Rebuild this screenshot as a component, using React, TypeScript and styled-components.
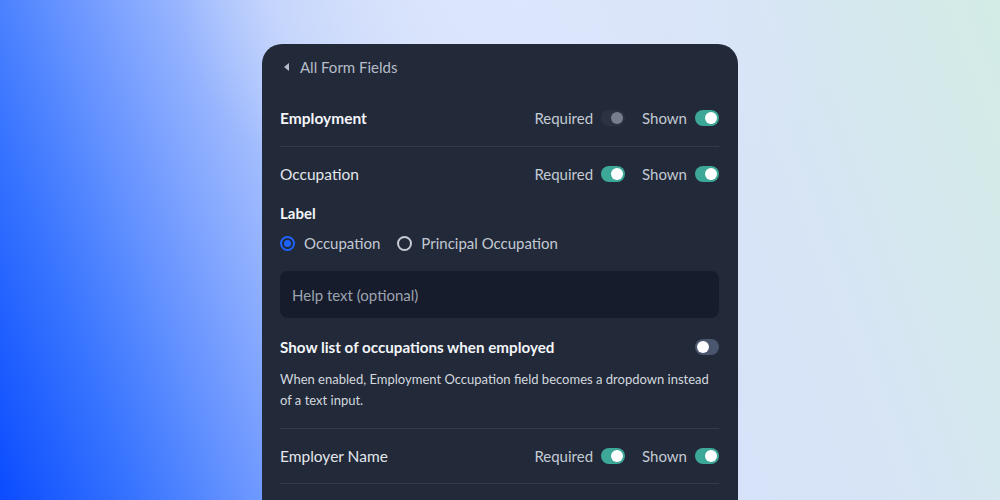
import React from "react";
import styled, { createGlobalStyle } from "styled-components";

const Global = createGlobalStyle`
  html, body { margin: 0; padding: 0; }
  body { font-family: "Lato", "Noto Sans", sans-serif; }
  * { box-sizing: border-box; }
`;

const Page = styled.div`
  width: 1000px;
  height: 500px;
  overflow: hidden;
  display: flex;
  justify-content: center;
  padding-top: 44px;
  background:
    radial-gradient(ellipse 340px 240px at 52% 0%, rgba(221, 230, 252, 0.9) 0%, rgba(221, 230, 252, 0) 100%),
    linear-gradient(70deg, #0a4cff 0%, #3a76ff 12%, #7ea3ff 25%, #bccffc 38%, #d6e1fa 52%, #d7e4f6 75%, #d3ece5 100%);
`;

const Panel = styled.div`
  width: 476px;
  background: #222938;
  border-radius: 20px 20px 0 0;
  padding: 13px 19px 0 18px;
  display: flex;
  flex-direction: column;
  color: #e6e9ee;
`;

const Back = styled.div`
  height: 20px;
  display: flex;
  align-items: center;
  gap: 11px;
  padding-left: 4px;
  font-size: 15px;
  color: #b6bdc9;
  margin-bottom: 13px;
`;

const Arrow = styled.span`
  width: 0;
  height: 0;
  border-top: 4px solid transparent;
  border-bottom: 4px solid transparent;
  border-right: 5px solid #b6bdc9;
`;

const FieldRow = styled.div<{ $h: number; $divider?: boolean }>`
  height: ${(p) => p.$h}px;
  display: flex;
  align-items: center;
  justify-content: space-between;
  border-bottom: ${(p) => (p.$divider ? "1px solid #323a4a" : "none")};
`;

const FieldName = styled.span<{ $bold?: boolean }>`
  font-size: 15.5px;
  font-weight: ${(p) => (p.$bold ? 700 : 400)};
  color: ${(p) => (p.$bold ? "#f3f5f8" : "#e3e6ec")};
`;

const Controls = styled.div`
  display: flex;
  align-items: center;
`;

const ControlLabel = styled.span`
  font-size: 15px;
  color: #c3c9d3;
  margin-right: 8px;
`;

const Track = styled.span<{ $on: boolean; $muted?: boolean; $gap?: number }>`
  width: 24px;
  height: 16px;
  border-radius: 8px;
  display: inline-flex;
  align-items: center;
  justify-content: ${(p) => (p.$on ? "flex-end" : "flex-start")};
  padding: 0 2px;
  margin-right: ${(p) => p.$gap ?? 0}px;
  background: ${(p) => (p.$muted ? "#2b3343" : p.$on ? "#3ea898" : "#4a556e")};
`;

const Knob = styled.span<{ $muted?: boolean }>`
  width: 12px;
  height: 12px;
  border-radius: 50%;
  background: ${(p) => (p.$muted ? "#767e8e" : "#ffffff")};
`;

const Toggle = ({ on, muted, gap }: { on: boolean; muted?: boolean; gap?: number }) => (
  <Track $on={on} $muted={muted} $gap={gap}>
    <Knob $muted={muted} />
  </Track>
);

const SectionTitle = styled.div`
  font-size: 15px;
  font-weight: 700;
  color: #f3f5f8;
  line-height: 18px;
  margin-top: 3px;
`;

const RadioGroup = styled.div`
  display: flex;
  align-items: center;
  height: 20px;
  margin-top: 11px;
  gap: 17px;
`;

const RadioOption = styled.label`
  display: flex;
  align-items: center;
  gap: 9px;
  font-size: 15px;
  color: #c3c9d3;
`;

const RadioDot = styled.span<{ $checked: boolean }>`
  width: 15px;
  height: 15px;
  border-radius: 50%;
  border: 2px solid ${(p) => (p.$checked ? "#1f63ff" : "#c6cbd4")};
  display: flex;
  align-items: center;
  justify-content: center;
  &::after {
    content: "";
    width: 7px;
    height: 7px;
    border-radius: 50%;
    background: ${(p) => (p.$checked ? "#1f63ff" : "transparent")};
  }
`;

const HelpInput = styled.div`
  margin-top: 18px;
  height: 47px;
  border-radius: 8px;
  background: #161c2b;
  display: flex;
  align-items: center;
  padding-left: 12px;
  font-size: 15px;
  color: #9ca3af;
`;

const OptionRow = styled.div`
  margin-top: 19px;
  height: 20px;
  display: flex;
  align-items: center;
  justify-content: space-between;
`;

const OptionTitle = styled.span`
  font-size: 15.2px;
  font-weight: 700;
  color: #f3f5f8;
`;

const Description = styled.p`
  margin: 12px 0 0;
  font-size: 13px;
  line-height: 21px;
  color: #d3d8df;
  padding-bottom: 17px;
  border-bottom: 1px solid #323a4a;
`;

const FieldControls = ({ required, requiredMuted }: { required: boolean; requiredMuted?: boolean }) => (
  <Controls>
    <ControlLabel>Required</ControlLabel>
    <Toggle on={required} muted={requiredMuted} gap={17} />
    <ControlLabel>Shown</ControlLabel>
    <Toggle on />
  </Controls>
);

export default function App() {
  return (
    <>
      <Global />
      <Page>
        <Panel>
          <Back>
            <Arrow />
            All Form Fields
          </Back>
          <FieldRow $h={57} $divider>
            <FieldName $bold>Employment</FieldName>
            <FieldControls required requiredMuted />
          </FieldRow>
          <FieldRow $h={54}>
            <FieldName>Occupation</FieldName>
            <FieldControls required />
          </FieldRow>
          <SectionTitle>Label</SectionTitle>
          <RadioGroup>
            <RadioOption>
              <RadioDot $checked />
              Occupation
            </RadioOption>
            <RadioOption>
              <RadioDot $checked={false} />
              Principal Occupation
            </RadioOption>
          </RadioGroup>
          <HelpInput>Help text (optional)</HelpInput>
          <OptionRow>
            <OptionTitle>Show list of occupations when employed</OptionTitle>
            <Toggle on={false} />
          </OptionRow>
          <Description>
            When enabled, Employment Occupation field becomes a dropdown instead of a text input.
          </Description>
          <FieldRow $h={55} $divider>
            <FieldName>Employer Name</FieldName>
            <FieldControls required />
          </FieldRow>
        </Panel>
      </Page>
    </>
  );
}
